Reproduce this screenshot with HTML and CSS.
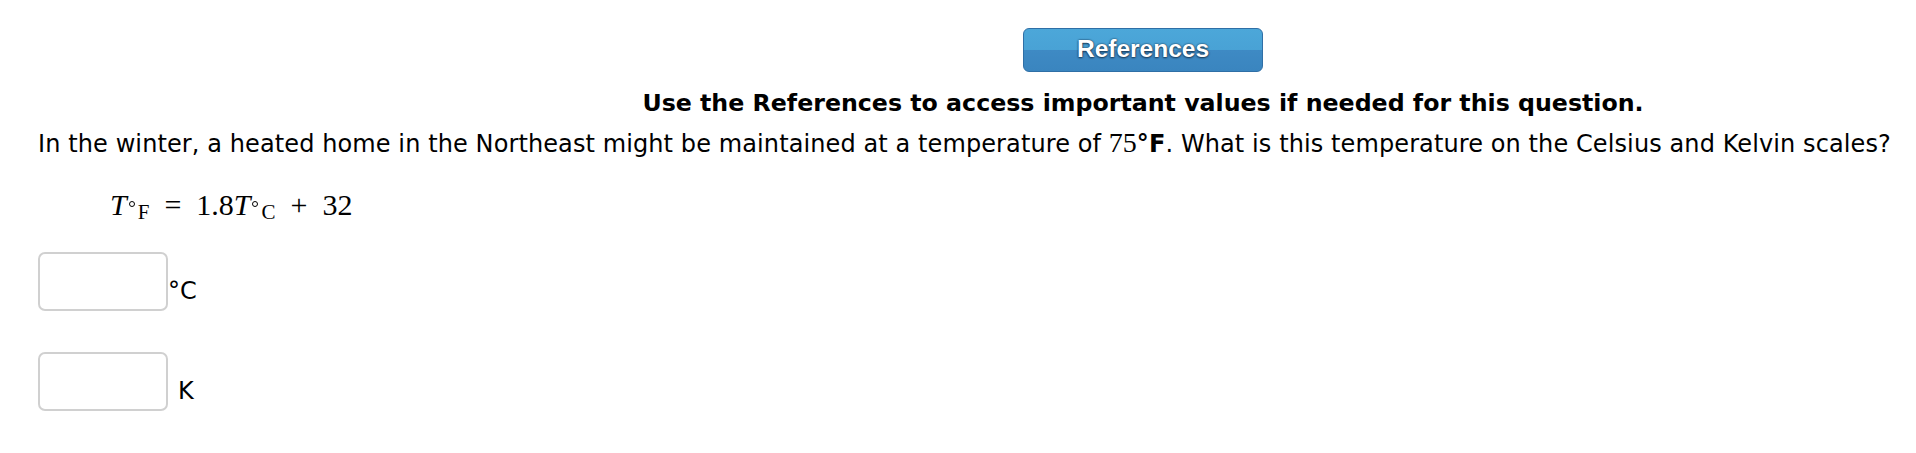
FILE: index.html
```html
<!DOCTYPE html>
<html>
<head>
<meta charset="utf-8">
<link rel="stylesheet" href="styles.css">
</head>
<body>
<div class="page">
  <div class="top">
    <div class="ref-btn"><span class="ref-label">References</span></div>
    <div class="heading">Use the References to access important values if needed for this question.</div>
  </div>
  <p class="question">In the winter, a heated home in the Northeast might be maintained at a temperature of <span class="num">75</span><b>°F</b>. What is this temperature on the Celsius and Kelvin scales?</p>
  <div class="equation"><span class="mi">T</span><span class="sub"><span class="deg"></span><span class="subl">F</span></span><span class="op">=</span><span class="mn">1.8</span><span class="mi">T</span><span class="sub"><span class="deg"></span><span class="subl">C</span></span><span class="op">+</span><span class="mn">32</span></div>
  <div class="answer">
    <div class="field"></div>
    <span class="unit">°C</span>
  </div>
  <div class="answer answer-k">
    <div class="field"></div>
    <span class="unit unit-k">K</span>
  </div>
</div>
</body>
</html>
```
FILE: styles.css
```css
html, body {
  margin: 0;
  padding: 0;
  background: #ffffff;
}
body {
  font-family: "DejaVu Sans", Verdana, sans-serif;
  color: #000000;
  font-size: 24px;
}
.page {
  padding-left: 38px;
}
.top {
  margin-left: 332px;
  padding-top: 28px;
  text-align: center;
}
.ref-btn {
  display: inline-block;
  box-sizing: border-box;
  width: 240px;
  height: 44px;
  border: 1px solid #2f6fa6;
  border-radius: 6px;
  background: linear-gradient(to bottom, #4ca7d9 0%, #49a2d5 50%, #3e8ac4 50%, #3a85bf 100%);
  vertical-align: top;
}
.ref-label {
  display: block;
  font-family: "Liberation Sans", Arial, sans-serif;
  font-weight: bold;
  font-size: 24.5px;
  line-height: 40px;
  color: #ffffff;
  text-shadow: 0 0 2px rgba(20, 45, 70, 1), 0 1px 2px rgba(20, 45, 70, 0.8);
}
.heading {
  margin-top: 17px;
  font-weight: bold;
  font-size: 23.7px;
  line-height: 28px;
}
.question {
  margin: 12px 0 0 0;
  line-height: 28px;
  letter-spacing: 0.1px;
  white-space: nowrap;
}
.num {
  font-family: "Liberation Serif", "Times New Roman", serif;
  font-size: 28px;
  line-height: 1;
  letter-spacing: 0;
}
.equation {
  margin-top: 32px;
  margin-left: 72px;
  font-family: "Liberation Serif", "Times New Roman", serif;
  font-size: 30px;
  line-height: 30px;
  height: 30px;
  white-space: nowrap;
}
.mi {
  font-style: italic;
}
.sub {
  margin-left: 2px;
  line-height: 1;
}
.deg {
  display: inline-block;
  width: 4px;
  height: 4px;
  border: 1px solid #000;
  border-radius: 50%;
  vertical-align: 8px;
}
.subl {
  font-size: 21px;
  line-height: 1;
  vertical-align: -4px;
  margin-left: 3px;
}
.op {
  margin: 0 15px;
}
.answer {
  display: flex;
  align-items: flex-end;
  margin-top: 32px;
}
.answer-k {
  margin-top: 41px;
}
.field {
  box-sizing: border-box;
  width: 130px;
  height: 59px;
  border: 2px solid #d0d0d0;
  border-radius: 7px;
  background: #ffffff;
}
.unit {
  line-height: 28px;
  padding-bottom: 6px;
  margin-left: 0;
}
.unit-k {
  margin-left: 10px;
}
```
